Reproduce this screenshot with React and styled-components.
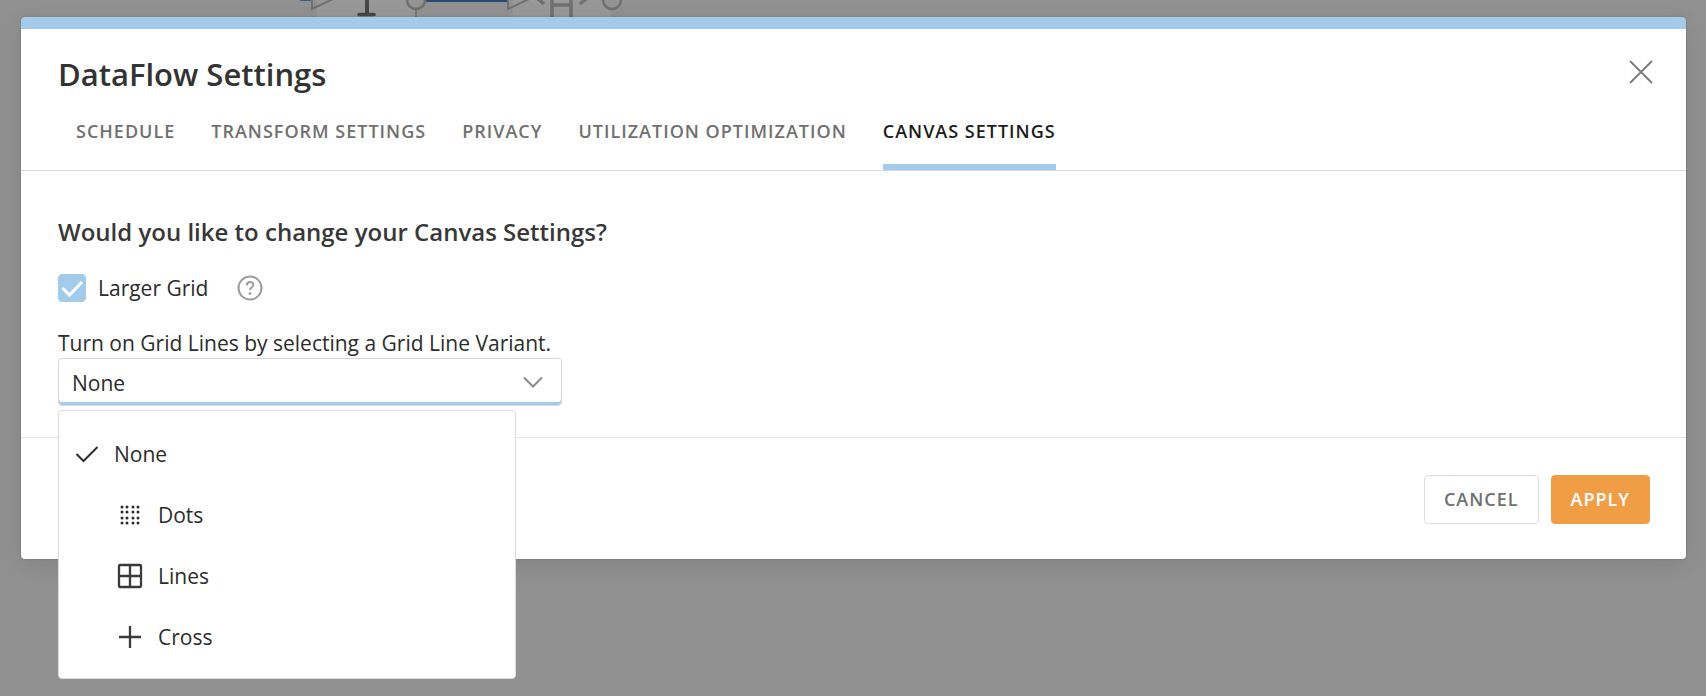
import React, { useState } from 'react';
import styled, { createGlobalStyle } from 'styled-components';

const GlobalStyle = createGlobalStyle`
	*, *::before, *::after {
		box-sizing: border-box;
	}
	body {
		margin: 0;
		background-color: #919191;
		color: #2c2c2c;
		font-family: "Open Sans", "Noto Sans", sans-serif;
		font-size: 21px;
		line-height: 30px;
	}
	button, input, select {
		font: inherit;
		color: inherit;
		margin: 0;
	}
`
const Page = styled.div`
	position: relative;
	min-height: 100vh;
	padding: 17px 20px 0 21px;
`
// the flow canvas that shows behind the dialog
const Backdrop = styled.svg`
	position: absolute;
	top: 0;
	left: 280px;
`
const Dialog = styled.section`
	position: relative;
	background-color: white;
	border-top: 12px solid #a3cbeb;
	border-radius: 4px;
	box-shadow: 0 6px 24px rgba(0, 0, 0, 0.1), 0 0 2px rgba(0, 0, 0, 0.2);
`
const Header = styled.header`
	border-bottom: 1px solid #d9d9d9;
`
const TitleRow = styled.div`
	display: flex;
	justify-content: space-between;
	align-items: center;
	padding: 25px 30px 0 37px;
`
const Title = styled.h1`
	margin: 0;
	color: #333;
	font-size: 31px;
	line-height: 40px;
	font-weight: 600;
`
const CloseButton = styled.button`
	display: flex;
	padding: 0;
	border: none;
	background: none;
	margin-bottom: 4px;
	cursor: pointer;
`
const Tabs = styled.nav`
	display: flex;
	gap: 36px;
	padding: 22px 55px 0;
`
const Tab = styled.button`
	height: 54px;
	padding: 0 0 18px;
	border: none;
	border-bottom: 6px solid ${props => props.$active ? '#a3cbeb' : 'transparent'};
	background: none;
	color: ${props => props.$active ? '#1c1c1c' : '#707070'};
	font-size: 18px;
	line-height: 26px;
	font-weight: 600;
	letter-spacing: 1px;
	white-space: nowrap;
	cursor: pointer;
`
const Body = styled.div`
	padding: 43px 37px 31px;
`
const Question = styled.h2`
	margin: 0 0 24px;
	color: #383838;
	font-size: 24px;
	line-height: 35px;
	font-weight: 600;
`
const CheckRow = styled.div`
	display: flex;
	align-items: center;
	margin-bottom: 25px;
`
const CheckLabel = styled.label`
	display: flex;
	align-items: center;
	gap: 12px;
	margin-right: 29px;
	cursor: pointer;
`
const CheckBox = styled.span`
	display: grid;
	width: 28px;
	height: 28px;
	> * {
		grid-area: 1 / 1;
	}
	svg {
		pointer-events: none;
	}
`
const CheckInput = styled.input`
	appearance: none;
	width: 28px;
	height: 28px;
	border: 1px solid #a3cbeb;
	border-radius: 4px;
	background-color: white;
	&:checked {
		background-color: #a3cbeb;
	}
`
const HelpButton = styled.button`
	display: flex;
	padding: 0;
	border: none;
	background: none;
`
const FieldLabel = styled.label`
	display: block;
`
const SelectBox = styled.div`
	position: relative;
	display: grid;
	align-items: center;
	width: 504px;
	max-width: 100%;
	> select, > svg {
		grid-area: 1 / 1;
	}
	> svg {
		justify-self: end;
		margin-right: 19px;
		pointer-events: none;
	}
`
const Select = styled.select`
	appearance: none;
	width: 100%;
	height: 48px;
	padding: 2px 13px 0;
	border: 1px solid #d6d6d6;
	border-radius: 4px;
	background-color: white;
	box-shadow: inset 0 -3px 0 #a3cbeb;
	outline: none;
`
const Menu = styled.ul`
	position: absolute;
	top: 52px;
	left: 0;
	z-index: 1;
	width: 458px;
	margin: 0;
	padding: 12px 0 11px;
	border: 1px solid #dcdcdc;
	border-radius: 4px;
	background-color: white;
	list-style: none;
`
const Option = styled.li`
	display: flex;
	align-items: center;
	gap: 15px;
	height: 61px;
	padding-left: ${props => props.$nested ? '58px' : '16px'};
	cursor: pointer;
`
const Footer = styled.footer`
	display: flex;
	justify-content: flex-end;
	gap: 12px;
	padding: 37px 36px 35px;
	border-top: 1px solid #e4e4e4;
`
const Button = styled.button`
	height: 49px;
	padding: 0 19px 1px;
	border: ${props => props.$primary ? '1px solid #ef9e45' : '1px solid #dedede'};
	border-radius: 4px;
	background-color: ${props => props.$primary ? '#ef9e45' : 'white'};
	color: ${props => props.$primary ? 'white' : '#707070'};
	font-size: 18px;
	line-height: 26px;
	font-weight: 600;
	letter-spacing: 1px;
	cursor: pointer;
`

const CanvasNodes = () => (
	<Backdrop width="370" height="40" fill="none" aria-hidden="true">
		<rect x="37" y="0" width="99" height="40" fill="#989898" />
		<rect x="233" y="0" width="98" height="40" fill="#989898" />
		<path d="M20 0h13" stroke="#3c5f84" strokeWidth="2" />
		<path d="M136 0h92" stroke="#294a72" strokeWidth="4" />
		<path d="M32 -10V9L53 -1" stroke="#707070" strokeWidth="2" />
		<path d="M228 -10V9L249 -1" stroke="#707070" strokeWidth="2" />
		<path d="M87 0v14" stroke="#464646" strokeWidth="4" />
		<path d="M79 14.5h15" stroke="#464646" strokeWidth="3.5" strokeLinecap="round" />
		<path d="M136 10v30" stroke="#777" strokeWidth="2" />
		<circle cx="136" cy="0" r="9" fill="#949494" stroke="#707070" strokeWidth="2.5" />
		<circle cx="332" cy="0" r="9" fill="#949494" stroke="#707070" strokeWidth="2.5" />
		<path d="M272 0v17M291 0v17M272 5h19M257 -2l7 6M307 -2l-7 6" stroke="#707070" strokeWidth="3.5" />
	</Backdrop>
);

const Tick = () => (
	<svg width="24" height="24" viewBox="0 0 24 24" fill="none" stroke="#2c2c2c" strokeWidth="2">
		<path d="M1.5 12l7 7L22.5 5" />
	</svg>
);

const DotsIcon = () => (
	<svg width="26" height="26" viewBox="0 0 26 26" fill="#2c2c2c">
		{[5, 10, 16, 21].map(y => [5, 10, 16, 21].map(x => (
			<circle key={`${x}-${y}`} cx={x} cy={y} r="1.5" />
		)))}
	</svg>
);

const LinesIcon = () => (
	<svg width="26" height="26" viewBox="0 0 26 26" fill="none" stroke="#3a3a3a" strokeWidth="2.3">
		<rect x="2" y="2" width="22" height="22" rx="1" />
		<path d="M13 2v22M2 13h22" />
	</svg>
);

const CrossIcon = () => (
	<svg width="26" height="26" viewBox="0 0 26 26" fill="none" stroke="#3a3a3a" strokeWidth="2.3">
		<path d="M13 2v22M2 13h22" />
	</svg>
);

const tabs = ['SCHEDULE', 'TRANSFORM SETTINGS', 'PRIVACY', 'UTILIZATION OPTIMIZATION', 'CANVAS SETTINGS'];

const variants = [
	{ name: 'None' },
	{ name: 'Dots', icon: <DotsIcon /> },
	{ name: 'Lines', icon: <LinesIcon /> },
	{ name: 'Cross', icon: <CrossIcon /> },
];

const App = () => {
	const [tab, setTab] = useState('CANVAS SETTINGS');
	const [larger, setLarger] = useState(true);
	const [variant, setVariant] = useState('None');

	return (
		<Page>
			<GlobalStyle />
			<CanvasNodes />
			<Dialog role="dialog" aria-labelledby="dialog-title">
				<Header>
					<TitleRow>
						<Title id="dialog-title">DataFlow Settings</Title>
						<CloseButton aria-label="Close">
							<svg width="30" height="30" viewBox="0 0 30 30" stroke="#7d7d7d" strokeWidth="2">
								<path d="M4 4l22 22M26 4L4 26" />
							</svg>
						</CloseButton>
					</TitleRow>
					<Tabs>
						{tabs.map(name => (
							<Tab key={name} $active={name === tab} onClick={() => setTab(name)}>{name}</Tab>
						))}
					</Tabs>
				</Header>
				<Body>
					<Question>Would you like to change your Canvas Settings?</Question>
					<CheckRow>
						<CheckLabel>
							<CheckBox>
								<CheckInput type="checkbox" checked={larger} onChange={() => setLarger(!larger)} />
								<svg width="28" height="28" viewBox="0 0 28 28" fill="none" stroke="white" strokeWidth="3">
									<path d="M4.5 14l7 7L24 8" />
								</svg>
							</CheckBox>
							Larger Grid
						</CheckLabel>
						<HelpButton aria-label="Help">
							<svg width="26" height="26" viewBox="0 0 26 26" fill="none" stroke="#9c9c9c" strokeWidth="2">
								<circle cx="13" cy="13" r="11.5" />
								<path d="M9.8 10.4c0-4.6 6.6-4.4 6.6-.6 0 2.4-3.4 2.4-3.4 5.2" />
								<circle cx="13" cy="18.6" r="1.4" fill="#9c9c9c" stroke="none" />
							</svg>
						</HelpButton>
					</CheckRow>
					<FieldLabel htmlFor="variant">Turn on Grid Lines by selecting a Grid Line Variant.</FieldLabel>
					<SelectBox>
						<Select id="variant" value={variant} onChange={e => setVariant(e.target.value)}>
							{variants.map(v => <option key={v.name}>{v.name}</option>)}
						</Select>
						<svg width="20" height="14" viewBox="0 0 20 14" fill="none" stroke="#8a8a8a" strokeWidth="2">
							<path d="M1 2.5l9 9 9-9" />
						</svg>
						<Menu role="listbox" aria-label="Grid Line Variant">
							{variants.map(v => (
								<Option
									key={v.name}
									role="option"
									aria-selected={v.name === variant}
									$nested={Boolean(v.icon)}
									onClick={() => setVariant(v.name)}
								>
									{v.icon || <Tick />}
									{v.name}
								</Option>
							))}
						</Menu>
					</SelectBox>
				</Body>
				<Footer>
					<Button>CANCEL</Button>
					<Button $primary>APPLY</Button>
				</Footer>
			</Dialog>
		</Page>
	);
};

export default App;
